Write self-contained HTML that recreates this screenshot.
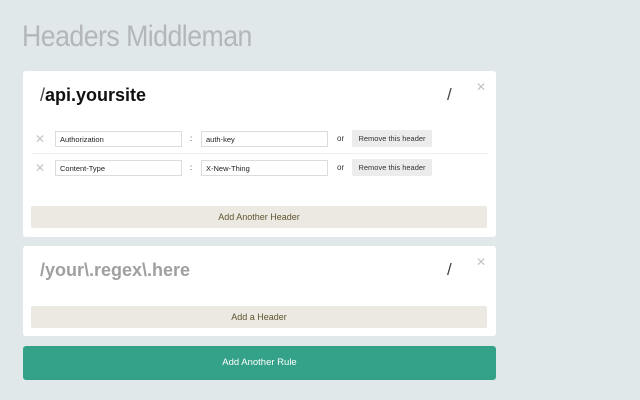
<!DOCTYPE html>
<html><head><style>
*{box-sizing:border-box;margin:0;padding:0}
body{width:640px;height:400px;background:#e1e8ea;font-family:"Liberation Sans",sans-serif;position:relative;overflow:hidden}
.abs{position:absolute}
h1{position:absolute;left:22px;top:20px;font-size:30px;font-weight:normal;color:#b3b7b9;letter-spacing:-0.6px;font-family:"Liberation Sans",sans-serif;transform:scaleX(0.89);transform-origin:left;white-space:nowrap}
.card{position:absolute;left:23px;width:473px;background:#fff;border-radius:3px}
.h{position:absolute;left:17px;font-size:18px;font-weight:bold}
.sl{position:absolute;left:424px;font-size:17px;color:#444}
.x{position:absolute;color:#c4c4c4;font-size:12px}
.in{position:absolute;height:16px;border:1px solid #dcdcdc;font-size:7.5px;padding-left:4px;display:flex;align-items:center;color:#222;background:#fff}
.btn{position:absolute;background:#ececec;border-radius:2px;font-size:7.5px;text-align:center;color:#333}
.add{position:absolute;left:8px;width:456px;height:22px;background:#ece9e2;border-radius:2px;text-align:center;line-height:22px;font-size:9px;color:#5e5530}
.t{position:absolute;font-size:8px;color:#333}
</style></head><body>
<h1>Headers Middleman</h1>
<div class="card" style="top:71px;height:166px">
  <div class="h" style="top:14px;color:#111"><span style="font-weight:normal;color:#444">/</span>api.yoursite</div>
  <div class="sl" style="top:14px">/</div>
  <div class="x" style="left:453px;top:9px">✕</div>
  <div class="x" style="left:12px;top:61px">✕</div>
  <div class="in" style="left:32px;top:60px;width:127px">Authorization</div>
  <div class="t" style="left:167px;top:63px">:</div>
  <div class="in" style="left:178px;top:60px;width:127px">auth-key</div>
  <div class="t" style="left:314px;top:63px">or</div>
  <div class="btn" style="left:329px;top:59px;width:80px;height:17px;line-height:17px">Remove this header</div>
  <div class="abs" style="left:9px;top:82px;width:456px;height:1px;background:#eee"></div>
  <div class="x" style="left:12px;top:90px">✕</div>
  <div class="in" style="left:32px;top:89px;width:127px">Content-Type</div>
  <div class="t" style="left:167px;top:92px">:</div>
  <div class="in" style="left:178px;top:89px;width:127px">X-New-Thing</div>
  <div class="t" style="left:314px;top:92px">or</div>
  <div class="btn" style="left:329px;top:88px;width:80px;height:17px;line-height:17px">Remove this header</div>
  <div class="add" style="top:135px">Add Another Header</div>
</div>
<div class="card" style="top:246px;height:90px">
  <div class="h" style="top:14px;color:#a0a0a0">/your\.regex\.here</div>
  <div class="sl" style="top:14px">/</div>
  <div class="x" style="left:453px;top:9px">✕</div>
  <div class="add" style="top:60px">Add a Header</div>
</div>
<div class="abs" style="left:23px;top:346px;width:473px;height:34px;background:#34a189;border-radius:3px;color:#fff;text-align:center;line-height:34px;font-size:9.5px">Add Another Rule</div>
</body></html>
